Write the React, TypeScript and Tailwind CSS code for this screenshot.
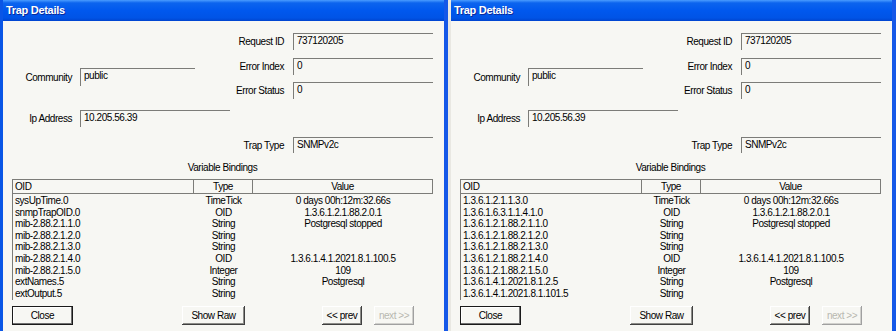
import React from 'react';

type Row = [string, string, string];

const leftRows: Row[] = [
  ['sysUpTime.0', 'TimeTick', '0 days 00h:12m:32.66s'],
  ['snmpTrapOID.0', 'OID', '1.3.6.1.2.1.88.2.0.1'],
  ['mib-2.88.2.1.1.0', 'String', 'Postgresql stopped'],
  ['mib-2.88.2.1.2.0', 'String', ''],
  ['mib-2.88.2.1.3.0', 'String', ''],
  ['mib-2.88.2.1.4.0', 'OID', '1.3.6.1.4.1.2021.8.1.100.5'],
  ['mib-2.88.2.1.5.0', 'Integer', '109'],
  ['extNames.5', 'String', 'Postgresql'],
  ['extOutput.5', 'String', ''],
];

const rightRows: Row[] = [
  ['1.3.6.1.2.1.1.3.0', 'TimeTick', '0 days 00h:12m:32.66s'],
  ['1.3.6.1.6.3.1.1.4.1.0', 'OID', '1.3.6.1.2.1.88.2.0.1'],
  ['1.3.6.1.2.1.88.2.1.1.0', 'String', 'Postgresql stopped'],
  ['1.3.6.1.2.1.88.2.1.2.0', 'String', ''],
  ['1.3.6.1.2.1.88.2.1.3.0', 'String', ''],
  ['1.3.6.1.2.1.88.2.1.4.0', 'OID', '1.3.6.1.4.1.2021.8.1.100.5'],
  ['1.3.6.1.2.1.88.2.1.5.0', 'Integer', '109'],
  ['1.3.6.1.4.1.2021.8.1.2.5', 'String', 'Postgresql'],
  ['1.3.6.1.4.1.2021.8.1.101.5', 'String', ''],
];

function Field({ value, w, h = 'h-[17px]' }: { value: string; w: string; h?: string }) {
  return (
    <div className={`${w} ${h} border-t border-l border-[#7c7c78] pl-[3px] pt-[1px] leading-[12px]`}>
      {value}
    </div>
  );
}

function Button({ label, w, primary, disabled }: { label: string; w: string; primary?: boolean; disabled?: boolean }) {
  return (
    <button
      className={`${w} h-[19px] leading-[12px] bg-[#f7f7f3] ${
        primary
          ? 'border border-[#1a1a1a] shadow-[inset_-1px_-1px_#707070,inset_1px_1px_#ffffff]'
          : disabled
          ? 'shadow-[inset_-1px_-1px_#a0a0a0,inset_1px_1px_#ffffff,inset_-2px_-2px_#d0d0cc] text-[#b8b8b0]'
          : 'shadow-[inset_-1px_-1px_#404040,inset_1px_1px_#ffffff,inset_-2px_-2px_#8c8c88]'
      }`}
    >
      {label}
    </button>
  );
}

function TrapWindow({ rows, second }: { rows: Row[]; second?: boolean }) {
  return (
    <div
      className={`w-[448px] h-[331px] flex flex-col border-r-[4px] border-r-[#1558e8] border-l-[3px] ${
        second ? 'border-l-[#e9e8e2]' : 'border-l-[#0a56e6]'
      }`}
    >
      {/* Title bar */}
      <div className="h-[21px] flex items-center pl-[3px] bg-[linear-gradient(to_bottom,#4a9cff_0%,#0c64ee_14%,#0058ee_50%,#0054e6_85%,#0044cf_100%)]">
        <span className="text-white font-bold text-[11px] tracking-[-0.3px] [text-shadow:1px_1px_#0a2a9a]">
          Trap Details
        </span>
      </div>

      {/* Body */}
      <div className="flex-1 bg-[#f7f7f3] pl-[9px] pr-[11px] text-[10px] tracking-[-0.45px] text-black">
        <div className="flex h-[138px]">
          <div className="flex flex-col pt-[47px]">
            <div className="flex items-center gap-[8px]">
              <span className="w-[60px] text-right">Community</span>
              <Field value="public" w="w-[115px]" h="h-[18px]" />
            </div>
            <div className="flex items-center gap-[8px] mt-[24px]">
              <span className="w-[60px] text-right">Ip Address</span>
              <Field value="10.205.56.39" w="w-[150px]" />
            </div>
          </div>
          <div className="ml-auto flex flex-col pt-[12px]">
            <div className="flex items-center gap-[9px]">
              <span className="w-[50px] text-right whitespace-nowrap">Request ID</span>
              <Field value="737120205" w="w-[140px]" />
            </div>
            <div className="flex items-center gap-[9px] mt-[8px]">
              <span className="w-[50px] text-right whitespace-nowrap">Error Index</span>
              <Field value="0" w="w-[140px]" />
            </div>
            <div className="flex items-center gap-[9px] mt-[7px]">
              <span className="w-[50px] text-right whitespace-nowrap">Error Status</span>
              <Field value="0" w="w-[140px]" />
            </div>
            <div className="flex items-center gap-[9px] mt-[38px]">
              <span className="w-[50px] text-right whitespace-nowrap">Trap Type</span>
              <Field value="SNMPv2c" w="w-[140px]" h="h-[16px]" />
            </div>
          </div>
        </div>

        <div className="h-[14px] leading-[14px] text-center mt-[2px]">Variable Bindings</div>

        {/* Bindings table */}
        <div className="mt-[4px] w-[421px] h-[121px] border-t border-l border-[#7c7c78]">
          <div className="flex h-[14px] leading-[13px]">
            <div className="w-[181px] pl-[2px] border-r border-b border-[#7c7c78]">OID</div>
            <div className="w-[59px] text-center border-r border-b border-[#7c7c78]">Type</div>
            <div className="flex-1 text-center border-r border-b border-[#7c7c78]">Value</div>
          </div>
          <div className="pt-[1px]">
            {rows.map(([oid, type, value]) => (
              <div key={oid} className="flex h-[11.6px] leading-[11.6px]">
                <div className="w-[181px] pl-[2px] whitespace-nowrap">{oid}</div>
                <div className="w-[59px] text-center">{type}</div>
                <div className="flex-1 text-center whitespace-nowrap">{value}</div>
              </div>
            ))}
          </div>
        </div>

        {/* Buttons */}
        <div className="flex items-center mt-[6px]">
          <Button label="Close" w="w-[61px]" primary />
          <div className="ml-[109px]">
            <Button label="Show Raw" w="w-[63px]" />
          </div>
          <div className="ml-[77px]">
            <Button label="<< prev" w="w-[40px]" />
          </div>
          <div className="ml-[12px]">
            <Button label="next >>" w="w-[40px]" disabled />
          </div>
        </div>
      </div>
    </div>
  );
}

export default function App() {
  return (
    <div className="w-[896px] h-[331px] overflow-hidden flex bg-white font-['Liberation_Sans',Arial,sans-serif]">
      <TrapWindow rows={leftRows} />
      <TrapWindow rows={rightRows} second />
    </div>
  );
}
